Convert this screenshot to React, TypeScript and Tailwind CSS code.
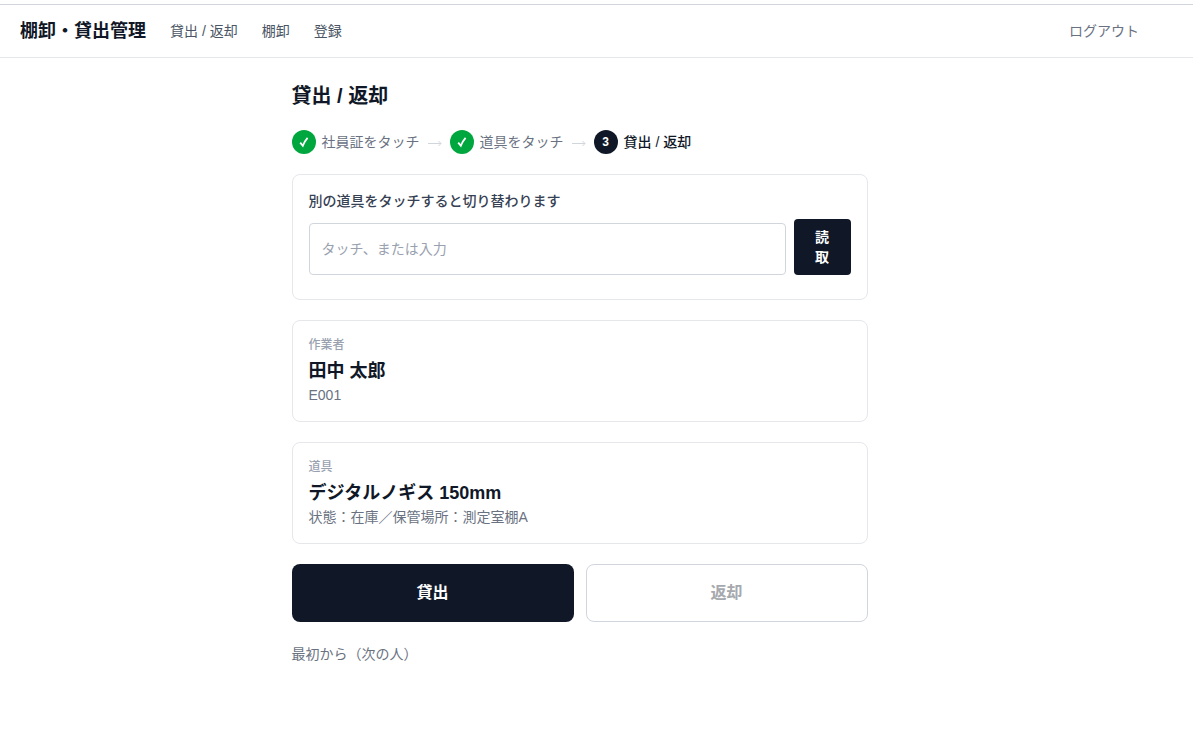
import React, { useState } from 'react';

const navItems = ['貸出 / 返却', '棚卸', '登録'];

const steps = [
  { label: '社員証をタッチ', done: true },
  { label: '道具をタッチ', done: true },
  { label: '貸出 / 返却', done: false },
];

interface InfoCardProps {
  label: string;
  title: string;
  detail: string;
}

const InfoCard: React.FC<InfoCardProps> = ({ label, title, detail }) => (
  <section className="rounded-lg border border-gray-200 bg-white p-4">
    <p className="text-xs font-medium text-gray-400">{label}</p>
    <h2 className="mt-1 text-lg font-bold text-gray-900">{title}</h2>
    <p className="text-sm text-gray-500">{detail}</p>
  </section>
);

const CheckIcon: React.FC = () => (
  <svg className="h-3 w-3" viewBox="0 0 12 12" fill="none" stroke="currentColor" strokeWidth="1.8" aria-hidden="true">
    <path d="M2.2 6.6L4.8 9.8C5.8 7 7.4 4.2 9.6 1.8" />
  </svg>
);

const ArrowIcon: React.FC = () => (
  <svg className="h-3.5 w-3.5 text-gray-300" viewBox="0 0 14 14" fill="none" stroke="currentColor" aria-hidden="true">
    <path d="M0 8.5H13M10.5 6L13 8.5L10.5 11" />
  </svg>
);

const Stepper: React.FC = () => (
  <ol className="mt-5 flex items-center gap-2 text-sm">
    {steps.map((step, i) => (
      <li key={step.label} className="flex items-center gap-2">
        {i > 0 && <ArrowIcon />}
        <span className="flex items-center gap-1.5">
          <span
            className={`flex h-6 w-6 items-center justify-center rounded-full text-xs font-bold text-white ${
              step.done ? 'bg-green-600' : 'bg-gray-900'
            }`}
          >
            {step.done ? <CheckIcon /> : i + 1}
          </span>
          <span className={step.done ? 'text-gray-500' : 'font-medium text-gray-900'}>{step.label}</span>
        </span>
      </li>
    ))}
  </ol>
);

export default function App() {
  const [code, setCode] = useState('');

  return (
    <div className="min-h-screen bg-white pt-1 font-['Liberation_Sans','Noto_Sans_CJK_JP',sans-serif] text-gray-900">
      <header className="border-y border-t-gray-300 border-b-gray-200">
        <div className="flex h-13 items-center gap-6 px-5">
          <span className="text-lg font-bold">棚卸・貸出管理</span>
          <nav className="flex gap-6 text-sm text-gray-600">
            {navItems.map((item) => (
              <a key={item} href="#">{item}</a>
            ))}
          </nav>
          <button type="button" className="mr-[34px] ml-auto text-sm text-gray-500">ログアウト</button>
        </div>
      </header>

      <main className="mr-[34px] px-6 py-6">
        <div className="mx-auto max-w-xl">
          <h1 className="text-xl font-bold">貸出 / 返却</h1>
          <Stepper />

          <form
            className="mt-5 rounded-lg border border-gray-200 p-4 pb-6"
            onSubmit={(e) => e.preventDefault()}
          >
            <label htmlFor="tool-code" className="block text-sm font-medium text-gray-700">
              別の道具をタッチすると切り替わります
            </label>
            <div className="mt-2 flex items-end gap-2">
              <input
                id="tool-code"
                value={code}
                onChange={(e) => setCode(e.target.value)}
                placeholder="タッチ、または入力"
                className="h-13 min-w-0 flex-1 rounded border border-gray-300 px-3 text-sm placeholder:text-gray-400"
              />
              <button type="submit" className="w-[57px] rounded bg-gray-900 px-5 py-2 text-sm font-bold text-white">
                読取
              </button>
            </div>
          </form>

          <div className="mt-5 space-y-5">
            <InfoCard label="作業者" title="田中 太郎" detail="E001" />
            <InfoCard label="道具" title="デジタルノギス 150mm" detail="状態：在庫／保管場所：測定室棚A" />
          </div>

          <div className="mt-5 grid grid-cols-2 gap-3">
            <button type="button" className="rounded-lg bg-gray-900 py-4 font-bold text-white">貸出</button>
            <button type="button" disabled className="rounded-lg border border-gray-300 py-4 font-bold text-[#a6a9ae]">
              返却
            </button>
          </div>
          <button type="button" className="mt-5 text-sm leading-6 text-gray-500">最初から（次の人）</button>
        </div>
      </main>
    </div>
  );
}
